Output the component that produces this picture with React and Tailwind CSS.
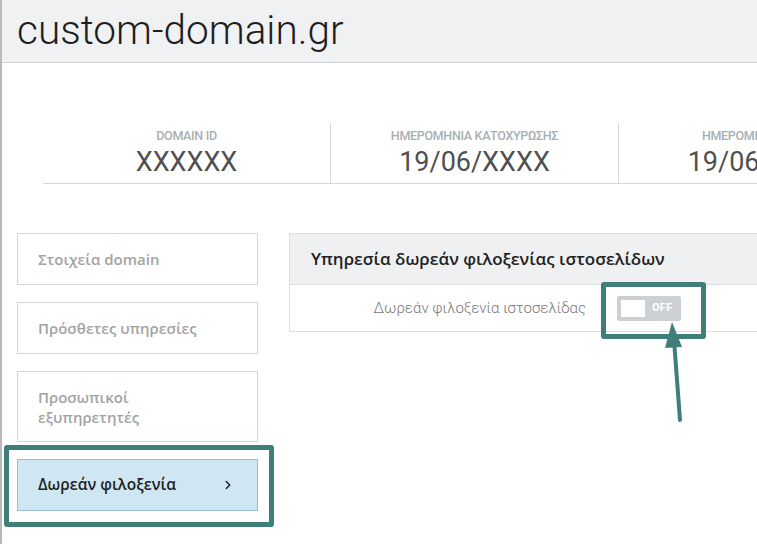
import { ChevronRight } from "lucide-react";

const stats = [
  { label: "DOMAIN ID", value: "XXXXXX" },
  { label: "ΗΜΕΡΟΜΗΝΙΑ ΚΑΤΟΧΥΡΩΣΗΣ", value: "19/06/XXXX" },
  { label: "ΗΜΕΡΟΜΗΝΙΑ ΛΗΞΗΣ", value: "19/06/XXXX" },
];

const menu = [
  { label: "Στοιχεία domain", tall: false },
  { label: "Πρόσθετες υπηρεσίες", tall: false },
  { label: "Προσωπικοί εξυπηρετητές", tall: true },
];

export default function App() {
  return (
    <div className="relative h-[544px] w-[757px] overflow-hidden border-l-2 border-[#b9b9b9] bg-white font-['Roboto',sans-serif]">
      <header className="flex h-[63px] items-center border-b border-[#cfd2d5] bg-[#f0f1f3] pl-[15px]">
        <h1 className="pb-[2px] text-[40.5px] font-light leading-none text-[#1e1e1e]">custom-domain.gr</h1>
      </header>

      <div className="ml-[41px] mt-[60px] flex h-[61px] w-[900px] border-b border-[#d6d9dc]">
        {stats.map((s, i) => (
          <div
            key={s.label}
            className={`flex w-[288px] shrink-0 flex-col items-center justify-center ${i < 2 ? "border-r border-[#d6d9dc]" : ""}`}
          >
            <span className="text-[12.5px] font-medium leading-none tracking-tight text-[#a7afb4]">{s.label}</span>
            <span className="mt-[6px] text-[27px] leading-none text-[#505050]">{s.value}</span>
          </div>
        ))}
      </div>

      <div className="mt-[49px] flex">
        <nav className="ml-[15px] flex w-[241px] shrink-0 flex-col gap-[17px] font-['Open_Sans',sans-serif]">
          {menu.map((m) => (
            <div
              key={m.label}
              className={`flex items-center border border-[#d6d6d6] bg-white px-[20px] text-[15px] font-semibold leading-[20px] text-[#a3a3a3] ${m.tall ? "h-[71px] pr-[100px]" : "h-[52px]"}`}
            >
              {m.label}
            </div>
          ))}
          <div className="relative flex h-[52px] items-center justify-between border border-[#98bfd6] bg-[#cfe6f3] pl-[20px] pr-[22px] text-[15.5px] font-semibold text-[#1f1f1f]">
            <span>Δωρεάν φιλοξενία</span>
            <ChevronRight size={14} strokeWidth={2.6} className="text-[#222]" />
            <div className="pointer-events-none absolute -bottom-[17px] -left-[14px] -right-[17px] -top-[15px] rounded-[3px] border-[5px] border-[#3f7e79]" />
          </div>
        </nav>

        <section className="ml-[31px] w-[520px] shrink-0">
          <div className="flex h-[52px] items-center border border-[#dcdfe2] bg-[#eff0f2] pl-[21px] font-['Open_Sans',sans-serif] text-[17px] font-semibold text-[#222]">
            Υπηρεσία δωρεάν φιλοξενίας ιστοσελίδων
          </div>
          <div className="flex h-[47px] items-center border border-t-0 border-[#dcdfe2]">
            <span className="w-[296px] text-right text-[15px] font-light text-[#777]">Δωρεάν φιλοξενία ιστοσελίδας</span>
            <div className="relative ml-[31px] flex h-[25px] w-[64px] items-center rounded-[2px] bg-[#ccd0d3] px-[4px]">
              <div className="h-[17px] w-[24px] bg-white" />
              <span className="ml-[7px] text-[11px] font-bold tracking-wide text-white">OFF</span>
              <div className="pointer-events-none absolute -bottom-[18px] -left-[16px] -right-[25px] -top-[14px] rounded-[3px] border-[5px] border-[#3f7e79]" />
            </div>
          </div>
        </section>
      </div>

      <svg className="pointer-events-none absolute left-0 top-0" width="757" height="544" viewBox="0 0 757 544">
        <line x1="678" y1="420" x2="672" y2="340" stroke="#3f7e79" strokeWidth="4" strokeLinecap="round" />
        <polygon points="670,322 663,348 680,347" fill="#3f7e79" />
      </svg>
    </div>
  );
}
